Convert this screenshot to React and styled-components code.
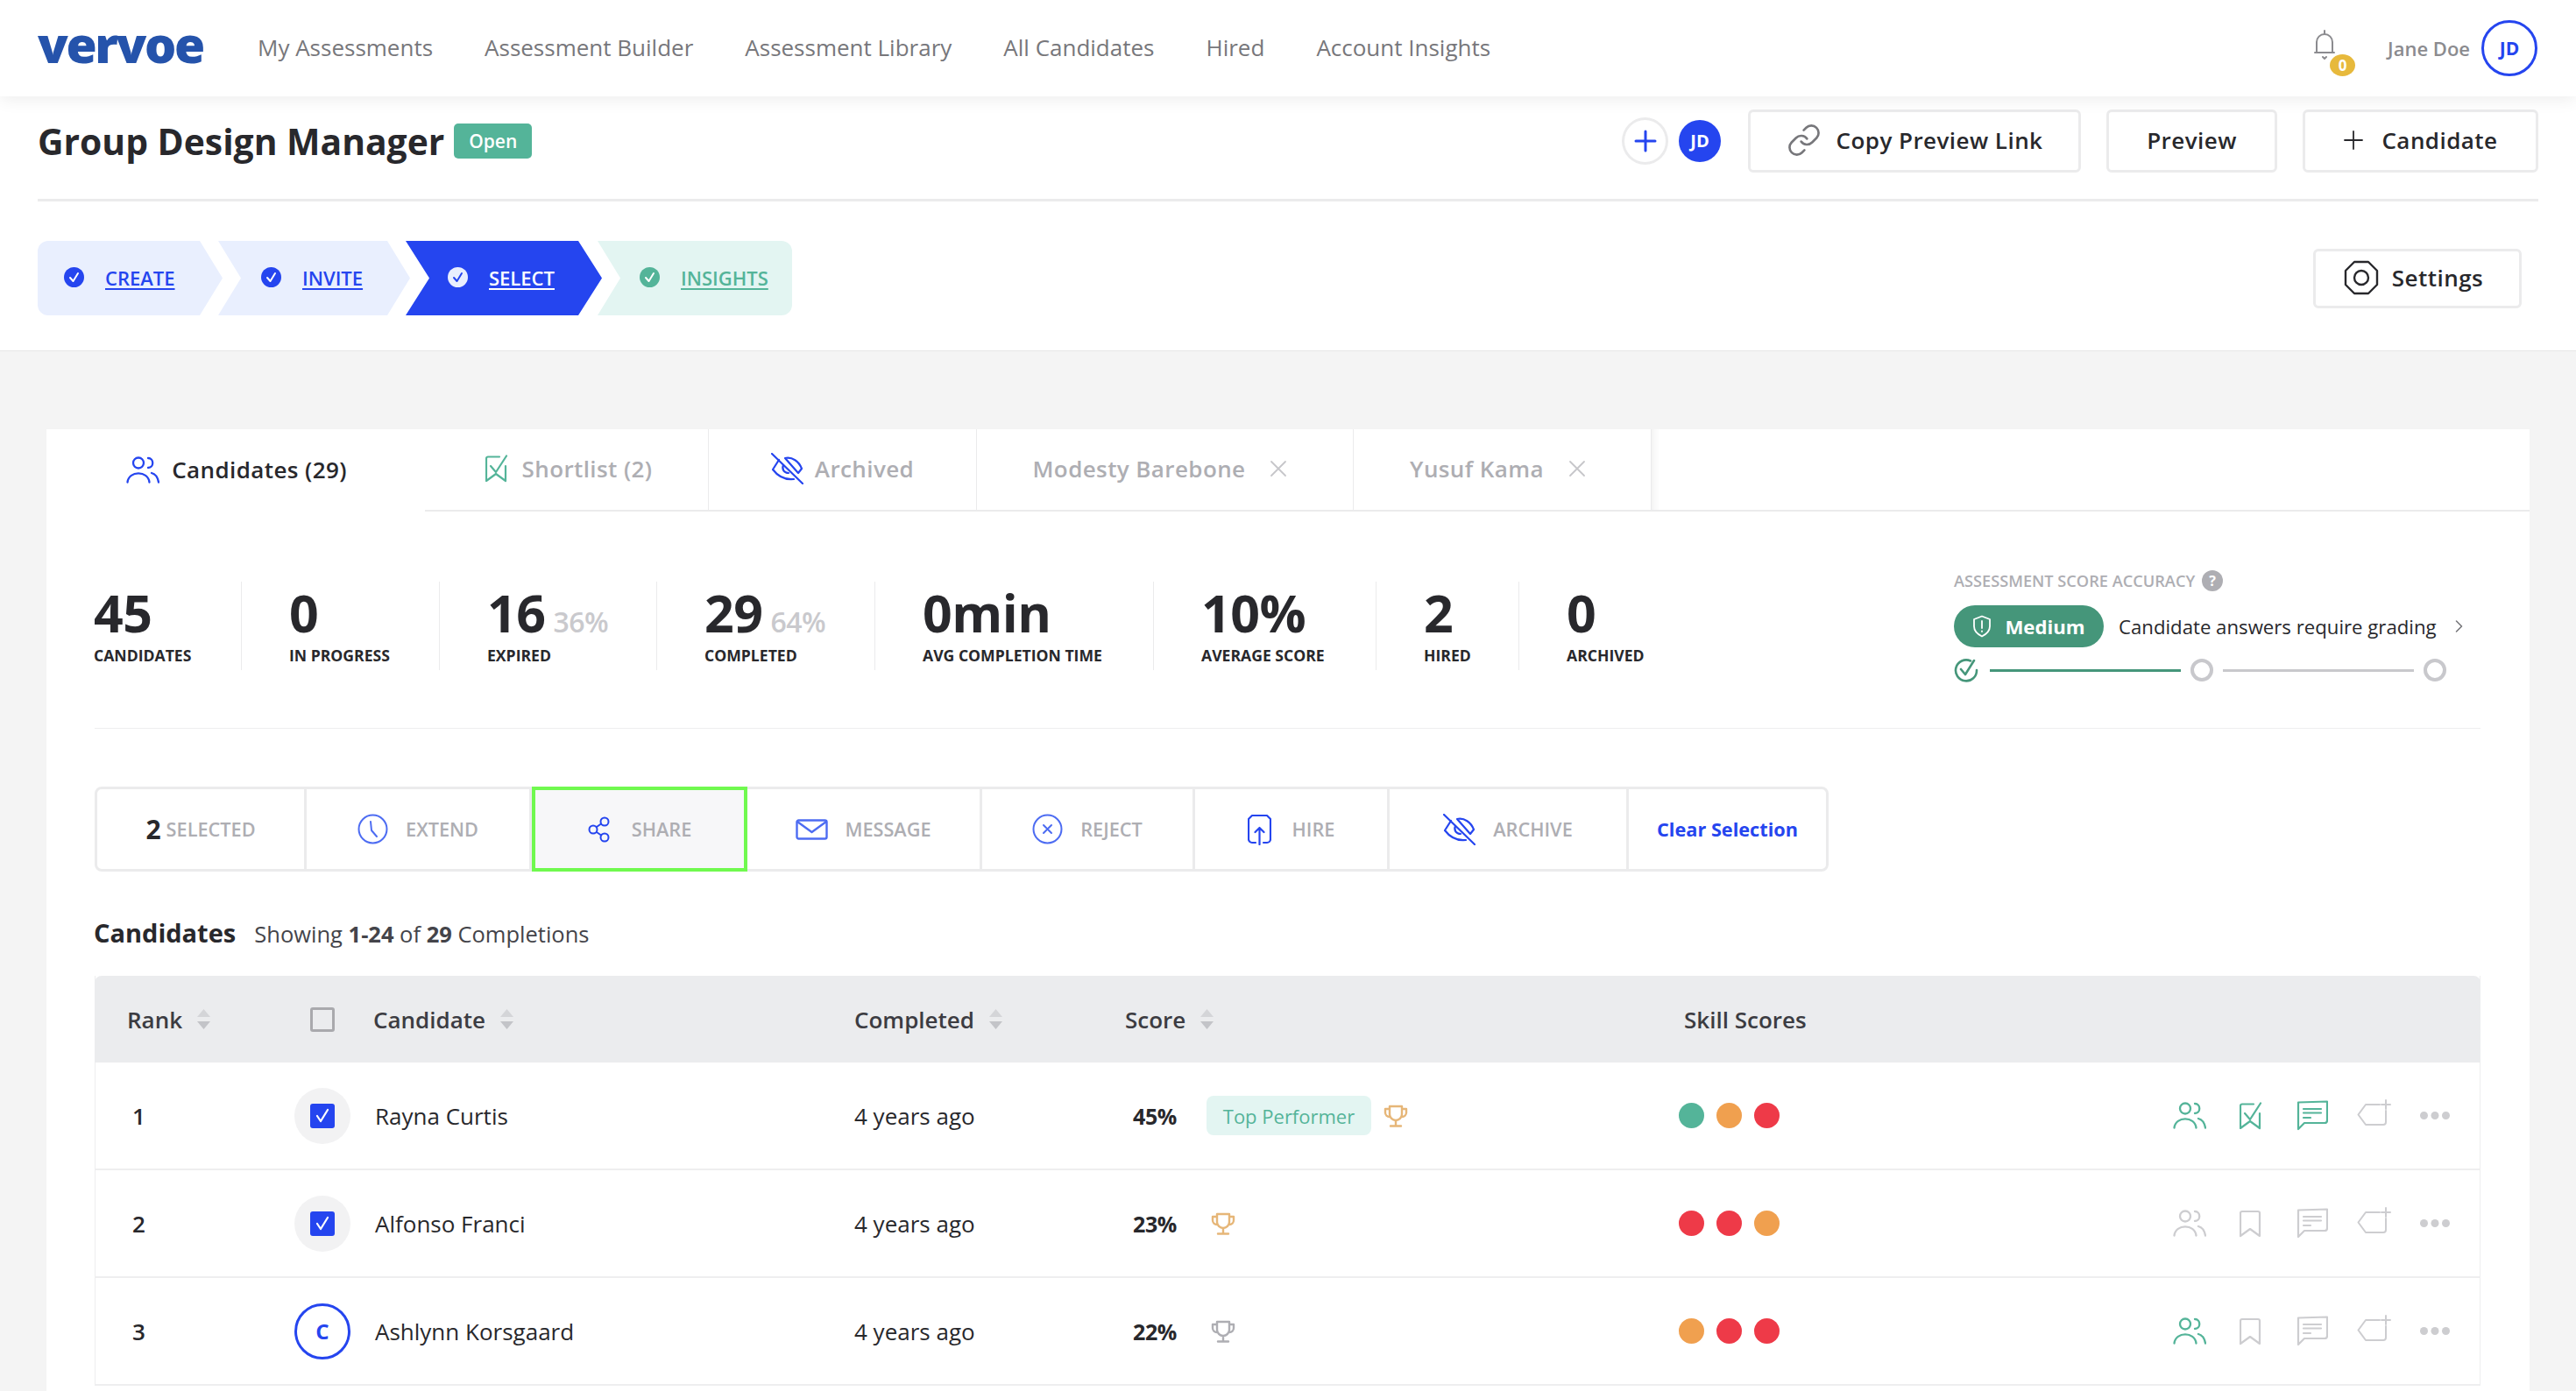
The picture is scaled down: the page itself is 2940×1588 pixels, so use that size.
import styled, { createGlobalStyle } from "styled-components";
import { Link as LinkIcon } from "lucide-react";

const BLUE = "#2545ef";
const GREEN = "#54b499";
const DARK = "#28282c";
const MUTED = "#aeaeb3";
const LINE = "#ebebec";

const GlobalStyle = createGlobalStyle`
  html, body {
    margin: 0;
    padding: 0;
    height: 100%;
    overflow: hidden;
    background: #f4f4f4;
  }
  * { box-sizing: border-box; }
  body {
    font-family: "Open Sans", "Liberation Sans", sans-serif;
    color: ${DARK};
  }
`;

const Page = styled.div`
  width: 2940px;
  height: 1588px;
  overflow: hidden;
  display: flex;
  flex-direction: column;
`;

const Header = styled.header`
  height: 110px;
  flex: none;
  display: flex;
  align-items: center;
  padding: 0 44px 0 43px;
  background: #fff;
  box-shadow: 0 4px 18px rgba(0, 0, 0, 0.07);
  position: relative;
  z-index: 2;
`;

const Logo = styled.div`
  font-size: 57px;
  font-weight: 800;
  line-height: 1;
  letter-spacing: -2.4px;
  color: #2553ab;
  width: 251px;
  margin-top: -10px;
`;

const Nav = styled.nav`
  display: flex;
  gap: 59px;
  font-size: 26px;
  color: #77777b;
  margin-top: -3px;
`;

const HeaderRight = styled.div`
  margin-left: auto;
  display: flex;
  align-items: center;
`;

const BellWrap = styled.div`
  position: relative;
  width: 24px;
  height: 32px;
  margin: -10px 60px 0 0;
  color: #8b8b8f;
`;

const BellBadge = styled.span`
  position: absolute;
  left: 18px;
  top: 28px;
  width: 29px;
  height: 25px;
  border-radius: 50%;
  background: #e7b93c;
  color: #fff;
  font-size: 17px;
  font-weight: 700;
  display: flex;
  align-items: center;
  justify-content: center;
`;

const UserName = styled.span`
  font-size: 22px;
  font-weight: 600;
  color: #8b8b8f;
  margin-right: 13px;
`;

const UserAvatar = styled.div`
  width: 64px;
  height: 64px;
  border-radius: 50%;
  border: 3px solid ${BLUE};
  color: ${BLUE};
  font-size: 21px;
  font-weight: 700;
  display: flex;
  align-items: center;
  justify-content: center;
`;

const Top = styled.section`
  flex: none;
  background: #fff;
  padding: 0 43px;
  border-bottom: 1px solid #e6e6e6;
`;

const TitleRow = styled.div`
  height: 120px;
  display: flex;
  align-items: center;
  padding-bottom: 16px;
  border-bottom: 3px solid ${LINE};
`;

const Title = styled.h1`
  margin: 0;
  font-size: 40.8px;
  font-weight: 700;
  color: ${DARK};
`;

const OpenBadge = styled.span`
  margin-left: 11px;
  width: 89px;
  height: 40px;
  border-radius: 5px;
  background: ${GREEN};
  color: #fff;
  font-size: 21px;
  font-weight: 600;
  display: flex;
  align-items: center;
  justify-content: center;
`;

const TitleActions = styled.div`
  margin-left: auto;
  display: flex;
  align-items: center;
`;

const PlusCircle = styled.div`
  width: 53px;
  height: 54px;
  border-radius: 50%;
  border: 3px solid ${LINE};
  color: ${BLUE};
  display: flex;
  align-items: center;
  justify-content: center;
  margin-right: 12px;
`;

const SmallAvatar = styled.div`
  width: 48px;
  height: 48px;
  border-radius: 50%;
  background: ${BLUE};
  color: #fff;
  font-size: 20px;
  font-weight: 700;
  display: flex;
  align-items: center;
  justify-content: center;
  margin-right: 31px;
`;

const Button = styled.div`
  height: ${(p) => p.$h || 72}px;
  width: ${(p) => p.$w}px;
  margin-left: ${(p) => p.$ml || 0}px;
  border: 3px solid ${LINE};
  border-radius: 6px;
  background: #fff;
  display: flex;
  align-items: center;
  justify-content: center;
  gap: ${(p) => p.$gap || 0}px;
  padding-bottom: 2px;
  font-size: 26px;
  letter-spacing: 0.45px;
  font-weight: 600;
  color: ${DARK};
`;

const StepsRow = styled.div`
  height: 170px;
  padding: 45px 19px 0 0;
  display: flex;
  justify-content: space-between;
  align-items: flex-start;
`;

const Steps = styled.div`
  display: flex;
`;

const Step = styled.div`
  width: ${(p) => p.$w}px;
  height: 85px;
  margin-left: ${(p) => (p.$first ? 0 : -5)}px;
  padding: 0 0 2px ${(p) => p.$pl}px;
  display: flex;
  align-items: center;
  gap: 24px;
  background: ${(p) => p.$bg};
  color: ${(p) => p.$color};
  border-radius: ${(p) => (p.$first ? "12px 0 0 12px" : p.$last ? "0 12px 12px 0" : "0")};
  clip-path: ${(p) => p.$clip};
  font-size: 22px;
  font-weight: 600;
  text-decoration: underline;
  text-underline-offset: 3px;
`;

const SettingsButton = styled(Button)`
  margin-top: 9px;
  padding-right: 9px;
`;

const Content = styled.main`
  flex: 1;
  min-height: 0;
  padding: 89px 53px 0;
  background: #f4f4f4;
  display: flex;
`;

const Card = styled.div`
  flex: 1;
  background: #fff;
  display: flex;
  flex-direction: column;
`;

const Tabs = styled.div`
  display: flex;
  height: 94px;
  flex: none;
`;

const Tab = styled.div`
  width: ${(p) => p.$w}px;
  display: flex;
  align-items: center;
  justify-content: center;
  gap: ${(p) => p.$gap || 16}px;
  padding: 0 ${(p) => p.$pr || 0}px 2px ${(p) => p.$pl || 0}px;
  font-size: 26px;
  letter-spacing: 0.4px;
  font-weight: 600;
  color: ${(p) => (p.$active ? DARK : MUTED)};
  border-right: ${(p) => (p.$active ? "none" : `1px solid ${LINE}`)};
  border-bottom: ${(p) => (p.$active ? "none" : `2px solid ${LINE}`)};
`;

const TabIcon = styled.span`
  display: flex;
  color: ${(p) => p.$c};
`;

const TabFill = styled.div`
  flex: 1;
  border-bottom: 2px solid ${LINE};
  box-shadow: inset 12px 0 10px -10px rgba(0, 0, 0, 0.07);
`;

const CloseMark = styled.span`
  color: #c6c6ca;
  display: flex;
  margin-left: 12px;
`;

const Body = styled.div`
  padding: 0 56px 0 55px;
`;

const StatsBlock = styled.div`
  padding-top: 67px;
  height: 248px;
  border-bottom: 1px solid #eeeeef;
  display: flex;
  justify-content: space-between;
`;

const StatList = styled.div`
  display: flex;
  height: 101px;
  margin: 13px 0 0 -1px;
`;

const Stat = styled.div`
  width: ${(p) => p.$w}px;
  height: 101px;
  padding-left: ${(p) => (p.$first ? 0 : 54)}px;
  border-right: ${(p) => (p.$last ? "none" : "1px solid #ebebec")};
`;

const StatValue = styled.div`
  height: 70px;
  display: flex;
  align-items: baseline;
  font-size: 59px;
  line-height: 71px;
  font-weight: 700;
  letter-spacing: -0.5px;
  color: ${DARK};
  white-space: nowrap;
`;

const StatPct = styled.span`
  margin-left: 9px;
  font-size: 32px;
  font-weight: 600;
  color: #c9c9cd;
`;

const StatLabel = styled.div`
  height: 29px;
  font-size: 17.6px;
  line-height: 29px;
  font-weight: 700;
  color: ${DARK};
  white-space: nowrap;
`;

const Accuracy = styled.div`
  width: 601px;
`;

const AccuracyLabel = styled.div`
  display: flex;
  align-items: center;
  gap: 8px;
  height: 24px;
  font-size: 18.2px;
  font-weight: 600;
  color: ${MUTED};
`;

const Help = styled.span`
  width: 24px;
  height: 24px;
  border-radius: 50%;
  background: ${MUTED};
  color: #fff;
  font-size: 16px;
  font-weight: 700;
  display: flex;
  align-items: center;
  justify-content: center;
`;

const AccuracyRow = styled.div`
  margin-top: 16px;
  display: flex;
  align-items: center;
  font-size: 22.2px;
  color: ${DARK};
`;

const MediumPill = styled.span`
  width: 171px;
  height: 48px;
  border-radius: 24px;
  background: #45967a;
  color: #fff;
  font-weight: 700;
  display: flex;
  align-items: center;
  justify-content: center;
  gap: 15px;
  margin-right: 17px;
`;

const Chevron = styled.span`
  margin-left: 21px;
  color: #77777b;
  display: flex;
`;

const Progress = styled.div`
  margin-top: 12px;
  display: flex;
  align-items: center;
`;

const ProgressLine = styled.div`
  width: 218px;
  height: 3px;
  margin: 0 ${(p) => p.$mr}px 0 ${(p) => p.$ml}px;
  background: ${(p) => (p.$on ? "#45967a" : "#c8c8cc")};
`;

const ProgressDot = styled.div`
  width: 26px;
  height: 26px;
  border-radius: 50%;
  border: 4px solid #c8c8cc;
`;

const ActionBar = styled.div`
  margin-top: 66px;
  width: 1979px;
  height: 97px;
  border: 3px solid ${LINE};
  border-radius: 8px;
  display: flex;
`;

const ActionCell = styled.div`
  width: ${(p) => p.$w}px;
  flex: none;
  display: flex;
  align-items: center;
  justify-content: center;
  gap: ${(p) => p.$gap || 20}px;
  font-size: 21.7px;
  font-weight: ${(p) => (p.$link ? 700 : 600)};
  color: ${(p) => (p.$link ? BLUE : MUTED)};
  border-right: ${(p) => (p.$plain ? "none" : `3px solid ${LINE}`)};
`;

const ShareCell = styled(ActionCell)`
  margin: -3px 0 -3px;
  border: 4px solid #70f94f;
  background: #f7f7f9;
`;

const CellIcon = styled.span`
  display: flex;
  color: ${(p) => (p.$soft ? "#4d6cf2" : BLUE)};
`;

const SelectedCount = styled.span`
  font-size: 30px;
  font-weight: 700;
  color: ${DARK};
  line-height: 1;
`;

const Caption = styled.div`
  height: 36px;
  margin: 53px 0 0 -1px;
  display: flex;
  align-items: center;
  gap: 21px;
  font-size: 25.5px;
  color: #44444a;
`;

const CaptionTitle = styled.span`
  font-size: 29px;
  font-weight: 700;
  color: ${DARK};
  margin-top: -3px;
`;

const Table = styled.div`
  margin-top: 30px;
  border-left: 1px solid #eeeeef;
  border-right: 1px solid #eeeeef;
`;

const HeadRow = styled.div`
  height: 99px;
  background: #ebecee;
  border-radius: 8px 8px 0 0;
  margin: 0 -1px;
  padding-left: 1px;
  display: grid;
  grid-template-columns: 227px 639px 309px 632px 1fr;
  align-items: center;
  font-size: 26px;
  font-weight: 600;
  color: #3c3c42;
`;

const HeadCell = styled.div`
  display: flex;
  align-items: center;
  gap: 16px;
  padding-left: ${(p) => p.$pl || 0}px;
`;

const HeadCheck = styled.span`
  width: 28px;
  height: 28px;
  margin-right: 28px;
  border: 3px solid #a9a9ad;
  border-radius: 3px;
`;

const Row = styled.div`
  height: 123px;
  display: grid;
  grid-template-columns: 227px 639px 309px 632px 1fr;
  align-items: center;
  border-bottom: 2px solid #eeeeef;
  font-size: 26px;
  color: ${DARK};
`;

const RankCell = styled.div`
  padding-left: 42px;
  font-weight: 600;
`;

const CandidateCell = styled.div`
  display: flex;
  align-items: center;
  gap: 28px;
`;

const Avatar = styled.div`
  width: 64px;
  height: 64px;
  border-radius: 50%;
  display: flex;
  align-items: center;
  justify-content: center;
  background: ${(p) => (p.$outline ? "#fff" : "#f2f2f3")};
  border: ${(p) => (p.$outline ? `3px solid ${BLUE}` : "none")};
  color: ${BLUE};
  font-size: 24px;
  font-weight: 700;
`;

const CheckBox = styled.span`
  width: 28px;
  height: 28px;
  border-radius: 3px;
  background: ${BLUE};
  display: flex;
  align-items: center;
  justify-content: center;
`;

const ScoreCell = styled.div`
  padding-left: 9px;
  display: flex;
  align-items: center;
`;

const ScoreValue = styled.span`
  width: 50px;
  margin-right: 34px;
  font-size: 25px;
  font-weight: 700;
  letter-spacing: -0.4px;
`;

const PerformerBadge = styled.span`
  width: 188px;
  height: 45px;
  border-radius: 8px;
  background: #e3f5f2;
  color: ${GREEN};
  font-size: 22px;
  display: flex;
  align-items: center;
  justify-content: center;
  margin-right: 14px;
`;

const TrophyWrap = styled.span`
  display: flex;
  margin-left: ${(p) => (p.$bare ? 5 : 0)}px;
  color: ${(p) => p.$color};
`;

const SkillCell = styled.div`
  display: flex;
  align-items: center;
  justify-content: space-between;
  padding-right: 16px;
`;

const Dots = styled.div`
  display: flex;
  gap: 14px;
`;

const Dot = styled.span`
  width: 29px;
  height: 29px;
  border-radius: 50%;
  background: ${(p) => p.$c};
`;

const RowIcons = styled.div`
  display: flex;
  align-items: center;
`;

const RowIcon = styled.span`
  width: 70px;
  display: flex;
  align-items: center;
  justify-content: center;
  padding-bottom: ${(p) => (p.$up ? 6 : 0)}px;
  color: ${(p) => (p.$on ? GREEN : "#cdcdd0")};
`;

const Svg = ({ w, h, sw = 2, children }) => (
  <svg width={w} height={h} viewBox={`0 0 ${w} ${h}`} fill="none" stroke="currentColor" strokeWidth={sw} strokeLinecap="round" strokeLinejoin="round">
    {children}
  </svg>
);

const Bell = () => (
  <Svg w={24} h={34}>
    <path d="M12 1v4M3 26V14a9 9 0 0 1 18 0v12M1 26h22M10 31l2 2 2-2" />
  </Svg>
);

const Plus = ({ s = 26, sw = 3 }) => (
  <Svg w={s} h={s} sw={sw}>
    <path d={`M${s / 2} 2V${s - 2}M2 ${s / 2}H${s - 2}`} />
  </Svg>
);

const CheckCircle = ({ bg, fg }) => (
  <svg width="23" height="23" viewBox="0 0 23 23">
    <circle cx="11.5" cy="11.5" r="11.5" fill={bg} />
    <path d="M7 12l3.5 4L16 7" fill="none" stroke={fg} strokeWidth="2" strokeLinecap="round" strokeLinejoin="round" />
  </svg>
);

const Gear = () => (
  <Svg w={40} h={40} sw={2.4}>
    <path d="M12 2h16l10 10v16L28 38H12L2 28V12z" />
    <circle cx="20" cy="20" r="8" />
  </Svg>
);

const People = () => (
  <Svg w={38} h={31} sw={2.3}>
    <circle cx="14" cy="7.5" r="6" />
    <path d="M25 2c7 0 7 11 0 11M1.5 29.5C3 16 25 16 26.5 29.5M29 19c4 1 7 5 8 10.5" />
  </Svg>
);

const BookmarkCheck = () => (
  <Svg w={26} h={32} sw={2.2}>
    <path d="M16 2.5H3a2 2 0 0 0-2 2V30l11-8 11 8V13" />
    <path d="M6 13l6 7L24 1.5" />
  </Svg>
);

const Bookmark = () => (
  <Svg w={26} h={32} sw={2.2}>
    <path d="M3 2h18a2 2 0 0 1 2 2v26l-11-8-11 8V4a2 2 0 0 1 2-2z" />
  </Svg>
);

const EyeOff = () => (
  <Svg w={37} h={36} sw={2.2}>
    <path d="M1 1l35 34" />
    <path d="M16 6c8-2 16 4 19 12l-4 5z" />
    <path d="M9 8L2 19c6 8 14 12 24 11" />
    <path d="M14 14c-2 5 1 9 6 9" />
  </Svg>
);

const Clock = () => (
  <Svg w={35} h={35} sw={2}>
    <circle cx="17.5" cy="17.5" r="16" />
    <path d="M15 9l1 10 6 7" />
  </Svg>
);

const ShareIcon = () => (
  <Svg w={26} h={30} sw={2}>
    <circle cx="19" cy="6" r="4.5" />
    <circle cx="6" cy="15" r="4.5" />
    <circle cx="19" cy="24" r="4.5" />
    <path d="M10 12l5-3.5M10 18l5 3.5" />
  </Svg>
);

const Envelope = () => (
  <Svg w={37} h={24} sw={2.4}>
    <rect x="1.5" y="1.5" width="34" height="21" rx="2" />
    <path d="M2 3l16.5 12L35 3" />
  </Svg>
);

const RejectIcon = () => (
  <Svg w={35} h={35} sw={2}>
    <circle cx="17.5" cy="17.5" r="16" />
    <path d="M13 13l9 9M22 13l-9 9" />
  </Svg>
);

const HireIcon = () => (
  <Svg w={27} h={36} sw={2.2}>
    <path d="M9 33H5a4 4 0 0 1-4-4V6l4-4h17l4 4v23a4 4 0 0 1-4 4h-4" />
    <path d="M13.5 35V16M8.5 21l5-5 5 5" />
  </Svg>
);

const Message = () => (
  <Svg w={36} h={35} sw={2.2}>
    <path d="M2 2.5L35 1.5V23a3 3 0 0 1-3 3H9l-7 7z" />
    <path d="M8 10h20M8 14.5h20M8 20h8" />
  </Svg>
);

const TagPlus = () => (
  <Svg w={39} h={31} sw={2}>
    <path d="M26 6H10L1.5 17.5 10 29h20a3 3 0 0 0 3-3V13M33 1v10M28 6h10" />
  </Svg>
);

const More = () => (
  <svg width="34" height="9" viewBox="0 0 34 9" fill="#cdcdd0">
    <circle cx="4.5" cy="4.5" r="4.5" />
    <circle cx="17" cy="4.5" r="4.5" />
    <circle cx="29.5" cy="4.5" r="4.5" />
  </svg>
);

const Trophy = () => (
  <Svg w={28} h={26} sw={2.4}>
    <path d="M7 2h14v9a7 7 0 0 1-14 0zM7 5H2v4a5 5 0 0 0 5 5M21 5h5v4a5 5 0 0 1-5 5M14 18v6M8 24.5h12" />
  </Svg>
);

const Sort = () => (
  <svg width="17" height="25" viewBox="0 0 17 25">
    <path d="M8.5 1L16 10H1z" fill="#d4d5d8" />
    <path d="M8.5 24L16 15H1z" fill="#c3c4c8" />
  </svg>
);

const TickBox = () => (
  <svg width="20" height="20" viewBox="0 0 20 20" fill="none" stroke="#fff" strokeWidth="2.2" strokeLinecap="round" strokeLinejoin="round">
    <path d="M4 10l4 6 8-13" />
  </svg>
);

const Shield = () => (
  <svg width="22" height="26" viewBox="0 0 22 26" fill="none" stroke="#fff" strokeWidth="1.8" strokeLinecap="round" strokeLinejoin="round">
    <path d="M11 1.5l9 3.5v8c0 5-4 9-9 11.5C6 22 2 18 2 13V5z" />
    <path d="M11 7v8M11 18.5v.5" />
  </svg>
);

const ProgressCheck = () => (
  <svg width="28" height="28" viewBox="0 0 28 28" fill="none" stroke="#45967a" strokeWidth="2.6" strokeLinecap="round" strokeLinejoin="round">
    <path d="M19 3.5A12 12 0 1 0 26 14" />
    <path d="M8 13l5 6L23 3" />
  </svg>
);

const X = () => (
  <Svg w={20} h={20} sw={1.8}>
    <path d="M2 2l16 16M18 2L2 18" />
  </Svg>
);

const Right = () => (
  <Svg w={9} h={16} sw={1.6}>
    <path d="M1.5 2l6 6-6 6" />
  </Svg>
);

const steps = [
  { name: "CREATE", w: 211, pl: 30, bg: "#e9effe", color: BLUE, first: true, clip: "polygon(0 0, 185px 0, 211px 50%, 185px 100%, 0 100%)", icon: [BLUE, "#fff"] },
  { name: "INVITE", w: 219, pl: 49, bg: "#e9effe", color: BLUE, clip: "polygon(0 0, 193px 0, 219px 50%, 193px 100%, 0 100%, 26px 50%)", icon: [BLUE, "#fff"] },
  { name: "SELECT", w: 224, pl: 48, bg: BLUE, color: "#fff", clip: "polygon(0 0, 197px 0, 224px 50%, 197px 100%, 0 100%, 27px 50%)", icon: ["#e9effe", BLUE] },
  { name: "INSIGHTS", w: 222, pl: 48, bg: "#e3f5f2", color: GREEN, last: true, clip: "polygon(0 0, 100% 0, 100% 100%, 0 100%, 26px 50%)", icon: [GREEN, "#fff"] },
];

const stats = [
  { value: "45", label: "CANDIDATES", w: 169 },
  { value: "0", label: "IN PROGRESS", w: 226 },
  { value: "16", pct: "36%", label: "EXPIRED", w: 248 },
  { value: "29", pct: "64%", label: "COMPLETED", w: 249 },
  { value: "0min", label: "AVG COMPLETION TIME", w: 318 },
  { value: "10%", label: "AVERAGE SCORE", w: 254 },
  { value: "2", label: "HIRED", w: 163 },
  { value: "0", label: "ARCHIVED", w: 200 },
];

const GREEN_DOT = "#54b499";
const ORANGE = "#f0a04f";
const RED = "#ee3a48";

const rows = [
  { rank: 1, name: "Rayna Curtis", score: "45%", top: true, trophy: "#e6b678", dots: [GREEN_DOT, ORANGE, RED], selected: true, people: true, saved: true, note: true },
  { rank: 2, name: "Alfonso Franci", score: "23%", trophy: "#e6b678", dots: [RED, RED, ORANGE], selected: true },
  { rank: 3, name: "Ashlynn Korsgaard", score: "22%", trophy: "#aeaeb3", dots: [ORANGE, RED, RED], people: true },
];

const App = () => (
  <Page>
    <GlobalStyle />
    <Header>
      <Logo>vervoe</Logo>
      <Nav>
        <span>My Assessments</span>
        <span>Assessment Builder</span>
        <span>Assessment Library</span>
        <span>All Candidates</span>
        <span>Hired</span>
        <span>Account Insights</span>
      </Nav>
      <HeaderRight>
        <BellWrap>
          <Bell />
          <BellBadge>0</BellBadge>
        </BellWrap>
        <UserName>Jane Doe</UserName>
        <UserAvatar>JD</UserAvatar>
      </HeaderRight>
    </Header>

    <Top>
      <TitleRow>
        <Title>Group Design Manager</Title>
        <OpenBadge>Open</OpenBadge>
        <TitleActions>
          <PlusCircle>
            <Plus />
          </PlusCircle>
          <SmallAvatar>JD</SmallAvatar>
          <Button $w={380} $gap={17}>
            <LinkIcon size={40} strokeWidth={1.6} color="#77777b" />
            Copy Preview Link
          </Button>
          <Button $w={195} $ml={29}>Preview</Button>
          <Button $w={269} $ml={29} $gap={20}>
            <Plus s={24} sw={1.8} />
            Candidate
          </Button>
        </TitleActions>
      </TitleRow>
      <StepsRow>
        <Steps>
          {steps.map((s) => (
            <Step key={s.name} $w={s.w} $pl={s.pl} $bg={s.bg} $color={s.color} $clip={s.clip} $first={s.first} $last={s.last}>
              <CheckCircle bg={s.icon[0]} fg={s.icon[1]} />
              {s.name}
            </Step>
          ))}
        </Steps>
        <SettingsButton $w={238} $h={68} $gap={15}>
          <Gear />
          Settings
        </SettingsButton>
      </StepsRow>
    </Top>

    <Content>
      <Card>
        <Tabs>
          <Tab $active $w={432} $gap={14} $pl={2}>
            <TabIcon $c={BLUE}>
              <People />
            </TabIcon>
            Candidates (29)
          </Tab>
          <Tab $w={324} $gap={16} $pl={5}>
            <TabIcon $c={GREEN}>
              <BookmarkCheck />
            </TabIcon>
            Shortlist (2)
          </Tab>
          <Tab $w={306} $gap={13}>
            <TabIcon $c={BLUE}>
              <EyeOff />
            </TabIcon>
            Archived
          </Tab>
          <Tab $w={430} $pr={11}>
            Modesty Barebone
            <CloseMark>
              <X />
            </CloseMark>
          </Tab>
          <Tab $w={340} $pr={10}>
            Yusuf Kama
            <CloseMark>
              <X />
            </CloseMark>
          </Tab>
          <TabFill />
        </Tabs>

        <Body>
          <StatsBlock>
            <StatList>
              {stats.map((s, i) => (
                <Stat key={s.label} $w={s.w} $first={i === 0} $last={i === stats.length - 1}>
                  <StatValue>
                    {s.value}
                    {s.pct && <StatPct>{s.pct}</StatPct>}
                  </StatValue>
                  <StatLabel>{s.label}</StatLabel>
                </Stat>
              ))}
            </StatList>
            <Accuracy>
              <AccuracyLabel>
                ASSESSMENT SCORE ACCURACY
                <Help>?</Help>
              </AccuracyLabel>
              <AccuracyRow>
                <MediumPill>
                  <Shield />
                  Medium
                </MediumPill>
                Candidate answers require grading
                <Chevron>
                  <Right />
                </Chevron>
              </AccuracyRow>
              <Progress>
                <ProgressCheck />
                <ProgressLine $on $ml={13} $mr={11} />
                <ProgressDot />
                <ProgressLine $ml={11} $mr={11} />
                <ProgressDot />
              </Progress>
            </Accuracy>
          </StatsBlock>

          <ActionBar>
            <ActionCell $w={239} $gap={6}>
              <SelectedCount>2</SelectedCount>
              SELECTED
            </ActionCell>
            <ActionCell $w={257}>
              <CellIcon $soft>
                <Clock />
              </CellIcon>
              EXTEND
            </ActionCell>
            <ShareCell $w={246} $gap={24}>
              <CellIcon>
                <ShareIcon />
              </CellIcon>
              SHARE
            </ShareCell>
            <ActionCell $w={268} $gap={19}>
              <CellIcon $soft>
                <Envelope />
              </CellIcon>
              MESSAGE
            </ActionCell>
            <ActionCell $w={243}>
              <CellIcon $soft>
                <RejectIcon />
              </CellIcon>
              REJECT
            </ActionCell>
            <ActionCell $w={222} $gap={24}>
              <CellIcon>
                <HireIcon />
              </CellIcon>
              HIRE
            </ActionCell>
            <ActionCell $w={273}>
              <CellIcon>
                <EyeOff />
              </CellIcon>
              ARCHIVE
            </ActionCell>
            <ActionCell $w={225} $link $plain>
              Clear Selection
            </ActionCell>
          </ActionBar>

          <Caption>
            <CaptionTitle>Candidates</CaptionTitle>
            <span>
              Showing <b>1-24</b> of <b>29</b> Completions
            </span>
          </Caption>

          <Table>
            <HeadRow>
              <HeadCell $pl={36}>
                Rank <Sort />
              </HeadCell>
              <HeadCell $pl={18}>
                <HeadCheck />
                Candidate <Sort />
              </HeadCell>
              <HeadCell>
                Completed <Sort />
              </HeadCell>
              <HeadCell>
                Score <Sort />
              </HeadCell>
              <HeadCell $pl={6}>Skill Scores</HeadCell>
            </HeadRow>
            {rows.map((r) => (
              <Row key={r.rank}>
                <RankCell>{r.rank}</RankCell>
                <CandidateCell>
                  {r.selected ? (
                    <Avatar>
                      <CheckBox>
                        <TickBox />
                      </CheckBox>
                    </Avatar>
                  ) : (
                    <Avatar $outline>C</Avatar>
                  )}
                  {r.name}
                </CandidateCell>
                <div>4 years ago</div>
                <ScoreCell>
                  <ScoreValue>{r.score}</ScoreValue>
                  {r.top && <PerformerBadge>Top Performer</PerformerBadge>}
                  <TrophyWrap $bare={!r.top} $color={r.trophy}>
                    <Trophy />
                  </TrophyWrap>
                </ScoreCell>
                <SkillCell>
                  <Dots>
                    {r.dots.map((c, i) => (
                      <Dot key={i} $c={c} />
                    ))}
                  </Dots>
                  <RowIcons>
                    <RowIcon $on={r.people}>
                      <People />
                    </RowIcon>
                    <RowIcon $on={r.saved}>{r.saved ? <BookmarkCheck /> : <Bookmark />}</RowIcon>
                    <RowIcon $on={r.note}>
                      <Message />
                    </RowIcon>
                    <RowIcon $up>
                      <TagPlus />
                    </RowIcon>
                    <RowIcon>
                      <More />
                    </RowIcon>
                  </RowIcons>
                </SkillCell>
              </Row>
            ))}
          </Table>
        </Body>
      </Card>
    </Content>
  </Page>
);

export default App;
